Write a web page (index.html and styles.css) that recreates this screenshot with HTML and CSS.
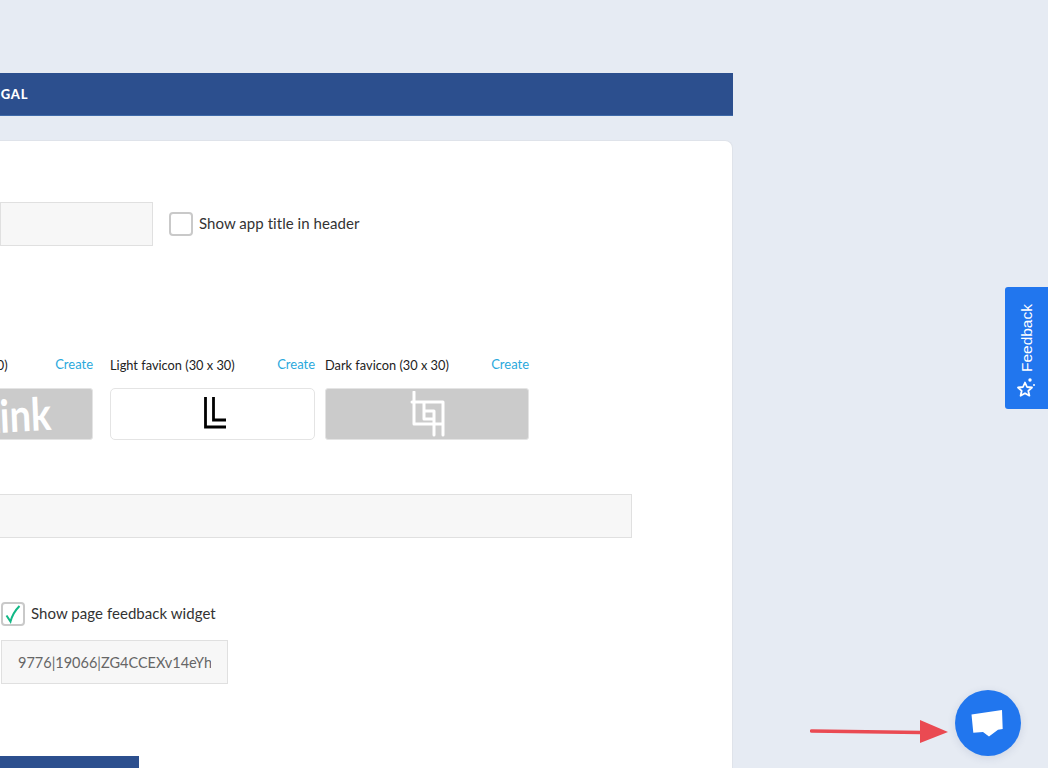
FILE: index.html
```html
<!DOCTYPE html>
<html lang="en">
<head>
<meta charset="utf-8">
<title>Settings</title>
<link rel="stylesheet" href="styles.css">
</head>
<body>
<main class="main">
  <nav class="navbar"><span class="nav-item">LEGAL</span></nav>
  <section class="card">
    <div class="row-title">
      <div class="field field-title"></div>
      <label class="check"><span class="box"></span><span class="check-text">Show app title in header</span></label>
    </div>
    <div class="tiles">
      <div class="tile-col col-a">
        <div class="tile-head"><span class="tile-label label-first">Dark logo (200 x 50)</span><a class="create">Create</a></div>
        <div class="tile tile-dark"><span class="ink">Link</span></div>
      </div>
      <div class="tile-col col-b">
        <div class="tile-head"><span class="tile-label">Light favicon (30 x 30)</span><a class="create">Create</a></div>
        <div class="tile tile-light">
          <svg class="fav" width="30" height="38" viewBox="0 0 30 38"><path d="M7.500 2V32H28M15.500 2V25H28" fill="none" stroke="#000" stroke-width="2.8"/></svg>
        </div>
      </div>
      <div class="tile-col col-c">
        <div class="tile-head"><span class="tile-label">Dark favicon (30 x 30)</span><a class="create">Create</a></div>
        <div class="tile tile-dark">
          <svg class="fav" width="36" height="46" viewBox="0 0 36 46"><path d="M5 1V33H34M3 11H34V44M15 11V28H25M15 20H25M25 20V44" fill="none" stroke="#fff" stroke-width="3" stroke-linejoin="round" stroke-linecap="round"/></svg>
        </div>
      </div>
    </div>
    <div class="field field-wide"></div>
    <label class="check check-feedback"><span class="box"><svg width="18" height="20" viewBox="0 0 18 20"><path d="M2.500 11.500 6.500 17.500C8 12 11 6.500 15.500 2" fill="none" stroke="#12b886" stroke-width="2"/></svg></span><span class="check-text">Show page feedback widget</span></label>
    <div class="field field-token"><span class="token">9776|19066|ZG4CCEXv14eYhGkQ2</span></div>
    <div class="save-btn"></div>
  </section>
</main>
<aside class="feedback-tab">
  <span class="feedback-text">Feedback</span>
  <svg width="20" height="22" viewBox="0 0 20 22"><path d="M8 7.500 10 12 15 12.500 11.300 15.800 12.400 20.700 8 18.200 3.600 20.700 4.700 15.800 1 12.500 6 12Z" fill="none" stroke="#fff" stroke-width="1.8" stroke-linejoin="round"/><circle cx="13" cy="5" r="1.7" fill="#fff"/><circle cx="17" cy="10" r="1" fill="#fff"/></svg>
</aside>
<svg class="arrow" width="140" height="26" viewBox="0 0 140 26"><path d="M1.500 12 111 13.500" stroke="#ea4a52" stroke-width="3.4" stroke-linecap="round"/><path d="M110 1 138 13 110 24Z" fill="#ea4a52"/></svg>
<button class="chat" type="button" aria-label="Chat">
  <svg width="66" height="66" viewBox="0 0 66 66"><path d="M16.500 24.500 47 20 47.700 39 43 39.800 34 46.500 28 42 18.300 42.800Z" fill="#fff"/></svg>
</button>
</body>
</html>
```
FILE: styles.css
```css
* { box-sizing: border-box; }
html, body { margin: 0; height: 768px; overflow: hidden; }
body {
  position: relative;
  background: #e6ebf3;
  font-family: "Lato", "Noto Sans", sans-serif;
  color: #333;
}
.main { width: 733px; padding-top: 73px; }
.navbar {
  height: 43px;
  background: #2c4f8e;
  border-bottom: 1px solid #3f6aa8;
  display: flex;
  align-items: center;
}
.nav-item {
  margin-left: -15px;
  color: #fff;
  font-size: 13px;
  font-weight: 900;
  letter-spacing: 0.8px;
}
.card {
  margin-top: 24px;
  height: 640px;
  background: #fff;
  border: 1px solid #dfe3ea;
  border-left: 0;
  border-bottom: 0;
  border-radius: 0 8px 0 0;
  padding-top: 61px;
}
.row-title { display: flex; align-items: center; gap: 16px; }
.field { background: #f7f7f7; border: 1px solid #e0e0e0; }
.field-title { width: 153px; height: 44px; flex: none; }
.check { display: flex; align-items: center; gap: 6px; font-size: 15px; line-height: 22px; letter-spacing: 0.05px; }
.check-text { padding-bottom: 2px; }
.box {
  width: 24px;
  height: 24px;
  border: 2.5px solid #c9c9c9;
  border-radius: 4px;
  background: #fff;
  display: flex;
  align-items: center;
  justify-content: center;
  flex: none;
}
.tiles { display: flex; margin-top: 108px; margin-left: -112px; }
.tile-col { width: 205px; flex: none; }
.col-b { margin-left: 17px; }
.col-c { margin-left: 10px; width: 204px; }
.tile-head {
  display: flex;
  justify-content: space-between;
  align-items: center;
  height: 22px;
  margin-bottom: 12px;
  font-size: 12.8px;
  white-space: nowrap;
  color: #222;
}
.label-first { margin-left: 5px; }
.create { color: #2aa8dc; font-size: 13px; position: relative; top: -1px; }
.tile {
  height: 52px;
  border-radius: 3px;
  border: 1px solid #e4e4e4;
  display: flex;
  align-items: center;
  justify-content: center;
  overflow: hidden;
}
.tile-dark { background: #cbcbcb; }
.tile-light { background: #fff; border-radius: 5px; }
.ink {
  font-family: "Lato", sans-serif;
  font-weight: 700;
  font-size: 38px;
  line-height: 1;
  color: #fff;
  position: relative;
  left: 25px;
  transform: scaleY(1.2) rotate(-3deg);
}
.field-wide { width: 633px; height: 44px; margin-left: -1px; margin-top: 54px; }
.check-feedback { margin-top: 64px; margin-left: 1px; }
.field-token {
  width: 227px;
  height: 44px;
  margin-left: 1px;
  margin-top: 14px;
  padding: 0 16px;
  display: flex;
  align-items: center;
  overflow: hidden;
}
.token { font-size: 14.5px; color: #666; white-space: nowrap; overflow: hidden; }
.save-btn { width: 139px; height: 30px; background: #2c4f8e; margin-top: 72px; }
.feedback-tab {
  position: absolute;
  left: 1005px;
  top: 287px;
  width: 43px;
  height: 122px;
  background: #2176ee;
  border-radius: 3px 0 0 3px;
  display: flex;
  flex-direction: column;
  align-items: center;
  justify-content: flex-end;
  gap: 3px;
  padding-bottom: 12px;
  color: #fff;
}
.feedback-text {
  font-family: "Liberation Sans", Arial, sans-serif;
  font-size: 15.5px;
  writing-mode: vertical-rl;
  transform: rotate(180deg);
  line-height: 20px;
}
.arrow { position: absolute; left: 810px; top: 719px; }
.chat {
  position: absolute;
  left: 955px;
  top: 690px;
  width: 66px;
  height: 66px;
  border: 0;
  padding: 0;
  border-radius: 50%;
  background: #2176ee;
  box-shadow: 0 2px 8px rgba(40, 60, 110, 0.12);
}
.chat svg { display: block; }
```
